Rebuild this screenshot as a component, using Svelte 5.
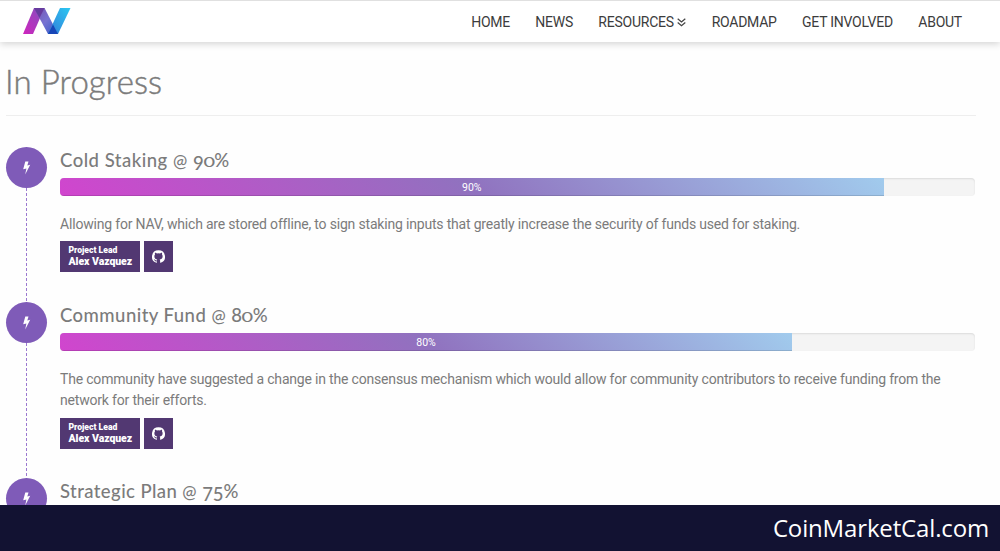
<script>
  const nav = ['HOME', 'NEWS', 'RESOURCES', 'ROADMAP', 'GET INVOLVED', 'ABOUT'];
  const items = [
    { title: 'Cold Staking', pct: 90, spacing: 0.5, text: 'Allowing for NAV, which are stored offline, to sign staking inputs that greatly increase the security of funds used for staking.' },
    { title: 'Community Fund', pct: 80, spacing: 0.46, text: 'The community have suggested a change in the consensus mechanism which would allow for community contributors to receive funding from the network for their efforts.' },
    { title: 'Strategic Plan', pct: 75, spacing: 0.42, text: '' }
  ];
  const kind = (d) => (d === '0' ? 'small' : d === '8' ? 'tall' : 'low');
</script>

<div class="page">
  <header>
    <svg class="logo" width="48" height="26" viewBox="0 0 48 26">
      <defs>
        <linearGradient id="pink" x1="0" y1="1" x2="1" y2="0"><stop stop-color="#cf25bd" /><stop offset="1" stop-color="#8250bf" /></linearGradient>
        <linearGradient id="mid" x1="0" y1="0" x2="1" y2="1"><stop stop-color="#7950ae" /><stop offset=".5" stop-color="#7773d2" /><stop offset="1" stop-color="#3159c5" /></linearGradient>
        <linearGradient id="cyan" x1="0" y1="1" x2="1" y2="0"><stop stop-color="#347bd8" /><stop offset="1" stop-color="#2bc8f2" /></linearGradient>
      </defs>
      <path d="M0 26 11 0H21.5L10 26Z" fill="url(#pink)" />
      <path d="M11 0H21.5L35 26H25Z" fill="url(#mid)" />
      <path d="M25 26 37 0H47.5L35 26Z" fill="url(#cyan)" />
      <path d="M11 0H21.5L16.5 10Z" fill="#663b9e" />
      <path d="M25 26 30 16.5 35 26Z" fill="#1746b7" />
    </svg>
    <nav>
      {#each nav as n}
        <a href="#top">{n}{#if n === 'RESOURCES'}<svg width="9" height="9" viewBox="0 0 9 9"><path d="M.7.8 4.5 4 8.3.8M.7 4.5l3.8 3.2 3.8-3.2" fill="none" stroke="#444" stroke-width="1.25" /></svg>{/if}</a>
      {/each}
    </nav>
  </header>
  <main>
    <h1>In Progress</h1>
    {#each items as it}
      <section>
        <div class="rail">
          <div class="dot">
            <svg width="9" height="14" viewBox="0 0 9 14"><path d="M3.3.5h3.2L5.3 4.4l2.9-.6L3.2 13.5l1.2-6-3.2.8Z" fill="#fff" /></svg>
          </div>
          {#if it.text}<div class="line"></div>{/if}
        </div>
        <div class="body">
          <h2 style="letter-spacing:{it.spacing}px">{it.title} <span class="at">@</span> <span class="num">{#each String(it.pct) as d}<span class={kind(d)}>{d}</span>{/each}%</span></h2>
          {#if it.text}
            <div class="track"><div class="fill" style="width:{it.pct}%">{it.pct}%</div></div>
            <p>{it.text}</p>
            <div class="tags">
              <div class="lead"><small>Project Lead</small><b>Alex Vazquez</b></div>
              <div class="gh">
                <svg width="13" height="13" viewBox="0 0 16 16"><path fill="#fff" d="M8 .2a8 8 0 0 0-2.5 15.6c.4.1.5-.2.5-.4v-1.5c-2.2.5-2.7-.9-2.7-.9-.4-.9-.9-1.2-.9-1.2-.7-.5.1-.5.1-.5.8.1 1.2.8 1.2.8.7 1.2 1.9.9 2.3.7.1-.5.3-.9.5-1.1-1.8-.2-3.6-.9-3.6-4 0-.9.3-1.6.8-2.1-.1-.2-.4-1 .1-2.1 0 0 .7-.2 2.2.8a7.7 7.7 0 0 1 4 0c1.5-1 2.2-.8 2.2-.8.4 1.1.2 1.9.1 2.1.5.6.8 1.3.8 2.1 0 3.1-1.9 3.8-3.7 4 .3.3.6.8.6 1.5v2.2c0 .2.1.5.5.4A8 8 0 0 0 8 .2Z" /></svg>
              </div>
            </div>
          {/if}
        </div>
      </section>
    {/each}
  </main>
  <footer>CoinMarketCal.com</footer>
</div>

<style>
  :global(body) { margin: 0; }
  .page { height: 551px; overflow: hidden; display: flex; flex-direction: column; background: #fefefe; font-family: Roboto, sans-serif; color: #7b7b7b; }
  header { height: 42px; flex: none; box-sizing: border-box; border-top: 1px solid #e0e0e0; background: #fff; box-shadow: 0 2px 7px rgba(0, 0, 0, .17); display: flex; justify-content: space-between; padding: 0 38px 0 23px; }
  .logo { margin-top: 7px; }
  nav { display: flex; gap: 25.3px; font-size: 14px; line-height: 42px; letter-spacing: -.24px; }
  a { color: #3c3c3c; text-decoration: none; white-space: nowrap; }
  a svg { margin-left: 3.5px; }
  main { flex: 1; min-height: 0; overflow: hidden; padding: 0 24px 0 6px; }
  h1 { margin: 0 0 31px; text-indent: -1px; height: 73px; border-bottom: 1px solid #eee; font: 300 33px/78px Lato, sans-serif; letter-spacing: .1px; -webkit-text-stroke: .45px #7b7b7b; }
  section { display: flex; gap: 13px; padding-right: 1px; }
  .rail { width: 41px; display: flex; flex-direction: column; align-items: center; }
  .dot { width: 41px; height: 41px; flex: none; border-radius: 50%; background: #7f5bb8; display: flex; align-items: center; justify-content: center; }
  .line { flex: 1; width: 1px; background: repeating-linear-gradient(#9b78d0 0 3px, transparent 3px 5px); }
  .body { flex: 1; min-width: 0; padding-bottom: 29.6px; }
  h2 { margin: 0; height: 31px; font: 500 18.5px/27px Lato, sans-serif; white-space: nowrap; }
  h2 span { display: inline-block; line-height: 1; }
  .num { letter-spacing: 0; }
  .small { transform: scale(1.08, .76); transform-origin: 50% 81%; }
  .low { transform: translateY(3px); }
  .at { font-size: 17px; }
  .track { height: 18px; border-radius: 4px; background: #f4f4f4; box-shadow: inset 0 1px 2px rgba(0, 0, 0, .1); overflow: hidden; }
  .fill { height: 100%; background: linear-gradient(45deg, #d145ce, #9072bf 50%, #a1cbed); box-shadow: inset 0 -1px 0 rgba(0, 0, 0, .12); color: #fff; font-size: 10.5px; line-height: 19px; text-align: center; }
  p { margin: 18px 0 6px; font-size: 14px; line-height: 21.4px; letter-spacing: -.185px; }
  .tags { display: flex; gap: 4px; }
  .lead, .gh { height: 31px; box-sizing: border-box; background: #523872; color: #fff; }
  .lead { width: 80px; padding: 3px 0 0 8.5px; font-weight: 700; white-space: nowrap; }
  .lead small, .lead b { display: block; line-height: 12px; }
  .lead small { font-size: 8.6px; font-weight: 900; }
  .lead b { font-size: 10.5px; letter-spacing: -.06px; }
  .gh { width: 28.5px; display: flex; align-items: center; justify-content: center; }
  footer { height: 46px; flex: none; background: #121232; color: #fff; font: 24px/45px "Open Sans", sans-serif; letter-spacing: -.15px; text-align: right; padding-right: 11px; }
</style>
